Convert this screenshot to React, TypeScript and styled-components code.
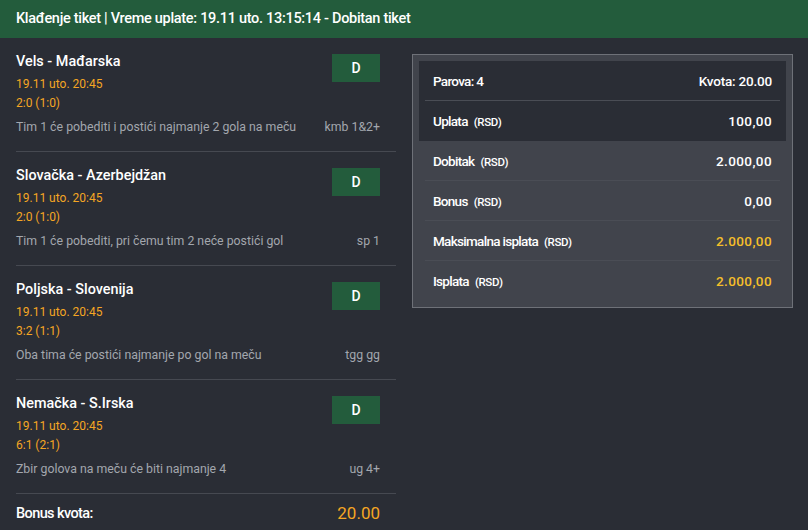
import React from "react";
import styled, { createGlobalStyle } from "styled-components";

const Global = createGlobalStyle`
  html, body { margin: 0; padding: 0; background: #2a2d35; overflow: hidden; }
  body { font-family: "Roboto", "Liberation Sans", sans-serif; color: #fff; }
  * { box-sizing: border-box; }
`;

const Header = styled.div`
  height: 38px;
  background: #235c3c;
  display: flex;
  align-items: center;
  padding: 0 16px 1px;
  font-size: 14.5px;
  font-weight: 500;
  letter-spacing: -0.3px;
`;

const Body = styled.div`
  display: grid;
  grid-template-columns: 380px 381px;
  gap: 16px;
  padding: 0 0 0 16px;
`;

const LeftCol = styled.div`
  display: flex;
  flex-direction: column;
`;

const Match = styled.div`
  display: flex;
  flex-direction: column;
  border-bottom: 1px solid #464951;
  padding: 16px 16px 17px 0;
`;

const TopLine = styled.div`
  display: flex;
  justify-content: space-between;
  align-items: flex-start;
`;

const Info = styled.div`
  display: flex;
  flex-direction: column;
`;

const Title = styled.div`
  font-size: 14.4px;
  font-weight: 500;
  line-height: 16px;
`;

const Orange = styled.div<{ $gap: number }>`
  color: #f5a623;
  font-size: 12px;
  line-height: 14px;
  margin-top: ${(p) => p.$gap}px;
`;

const Desc = styled.div`
  display: flex;
  justify-content: space-between;
  color: #a3a7ae;
  font-size: 12.3px;
  line-height: 14px;
  margin-top: 10px;
`;

const Pick = styled.div`
  width: 48px;
  height: 28px;
  background: #235c3c;
  display: flex;
  align-items: center;
  justify-content: center;
  font-size: 14px;
  font-weight: 500;
`;

const BonusRow = styled.div`
  display: flex;
  justify-content: space-between;
  align-items: center;
  height: 20px;
  margin-top: 9px;
  padding-right: 16px;
  font-size: 14.5px;
  font-weight: 500;
  letter-spacing: -0.6px;
`;

const BonusValue = styled.span`
  color: #f5a623;
  font-size: 17px;
  font-weight: 400;
  letter-spacing: 0;
`;

const Panel = styled.div`
  border: 1px solid #6e7178;
  background: #41444c;
  padding: 6px;
  align-self: start;
  margin-top: 16px;
  font-weight: 500;
`;

const TopBox = styled.div`
  background: #2a2d35;
  padding: 0 6px;
`;

const Bottom = styled.div`
  padding: 0 6px;
`;

const Row = styled.div<{ $last?: boolean }>`
  height: 40px;
  display: flex;
  align-items: center;
  justify-content: space-between;
  padding: 0 8px;
  font-size: 13.5px;
  border-bottom: ${(p) => (p.$last ? "none" : "1px solid #4a4d55")};
`;

const Label = styled.span`
  display: flex;
  gap: 6px;
  align-items: baseline;
  letter-spacing: -0.7px;
`;

const Unit = styled.span`
  font-size: 11.5px;
  letter-spacing: -0.4px;
`;

const Value = styled.span<{ $gold?: boolean }>`
  color: ${(p) => (p.$gold ? "#f5bf2a" : "#fff")};
  font-size: 13.5px;
  letter-spacing: 0.4px;
`;

const Odds = styled.span`
  letter-spacing: -0.2px;
`;

const matches = [
  { t: "Vels - Mađarska", d: "19.11 uto. 20:45", s: "2:0 (1:0)", desc: "Tim 1 će pobediti i postići najmanje 2 gola na meču", code: "kmb 1&2+" },
  { t: "Slovačka - Azerbejdžan", d: "19.11 uto. 20:45", s: "2:0 (1:0)", desc: "Tim 1 će pobediti, pri čemu tim 2 neće postići gol", code: "sp 1" },
  { t: "Poljska - Slovenija", d: "19.11 uto. 20:45", s: "3:2 (1:1)", desc: "Oba tima će postići najmanje po gol na meču", code: "tgg gg" },
  { t: "Nemačka - S.Irska", d: "19.11 uto. 20:45", s: "6:1 (2:1)", desc: "Zbir golova na meču će biti najmanje 4", code: "ug 4+" },
];

export default function App() {
  return (
    <>
      <Global />
      <Header>Klađenje tiket | Vreme uplate: 19.11 uto. 13:15:14 - Dobitan tiket</Header>
      <Body>
        <LeftCol>
          {matches.map((m) => (
            <Match key={m.t}>
              <TopLine>
                <Info>
                  <Title>{m.t}</Title>
                  <Orange $gap={7}>{m.d}</Orange>
                  <Orange $gap={5}>{m.s}</Orange>
                </Info>
                <Pick>D</Pick>
              </TopLine>
              <Desc>
                <span>{m.desc}</span>
                <span>{m.code}</span>
              </Desc>
            </Match>
          ))}
          <BonusRow>
            <span>Bonus kvota:</span>
            <BonusValue>20.00</BonusValue>
          </BonusRow>
        </LeftCol>
        <Panel>
          <TopBox>
            <Row>
              <Label>Parova: 4</Label>
              <Odds>Kvota: 20.00</Odds>
            </Row>
            <Row $last>
              <Label>Uplata <Unit>(RSD)</Unit></Label>
              <Value>100,00</Value>
            </Row>
          </TopBox>
          <Bottom>
            <Row>
              <Label>Dobitak <Unit>(RSD)</Unit></Label>
              <Value>2.000,00</Value>
            </Row>
            <Row>
              <Label>Bonus <Unit>(RSD)</Unit></Label>
              <Value>0,00</Value>
            </Row>
            <Row>
              <Label>Maksimalna isplata <Unit>(RSD)</Unit></Label>
              <Value $gold>2.000,00</Value>
            </Row>
            <Row $last>
              <Label>Isplata <Unit>(RSD)</Unit></Label>
              <Value $gold>2.000,00</Value>
            </Row>
          </Bottom>
        </Panel>
      </Body>
    </>
  );
}
